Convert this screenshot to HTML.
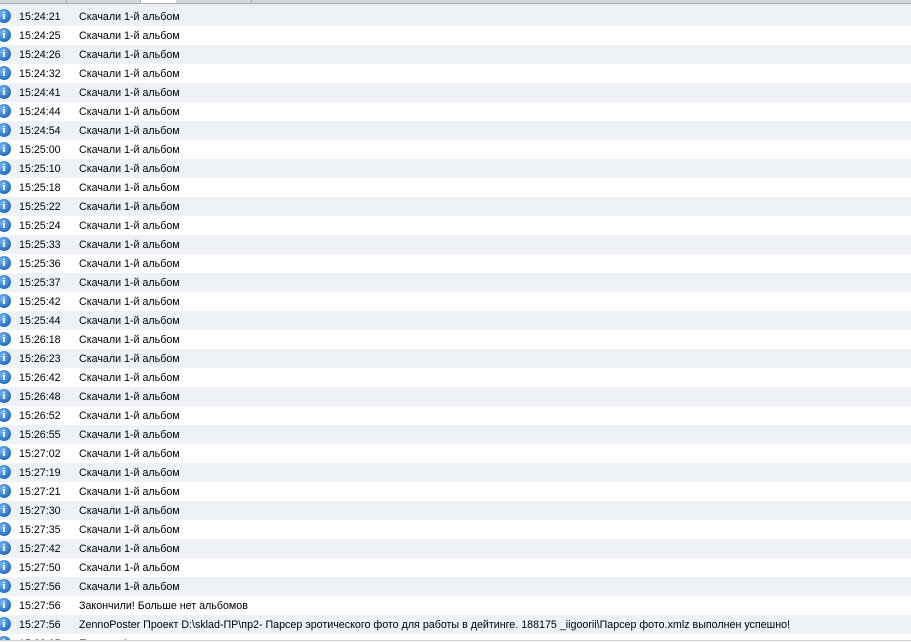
<!DOCTYPE html>
<html><head><meta charset="utf-8"><style>
html,body{margin:0;width:911px;height:643px;overflow:hidden;background:#fff}
body{font-family:Tahoma,"Liberation Sans",sans-serif;font-size:10.7px;color:#000;position:relative}
.tabs{position:absolute;left:0;top:0;width:911px;height:3px;background:#d3d7dc}
.tab{position:absolute;top:0;height:3px;border-right:1px solid #a8adb3}
.line{position:absolute;left:0;top:3px;width:911px;height:1px;background:#a9aeb4}
.strip{position:absolute;left:0;top:4px;width:911px;height:3px;background:#e9edf2}
#rows{position:absolute;left:0;top:0;width:911px;height:640px;overflow:hidden}
.row{position:absolute;left:0;width:911px;height:19px;line-height:21px;white-space:nowrap}
.row.s{background:#eef2f7}
.t{position:absolute;left:19px}
.m{position:absolute;left:79px}
.i{position:absolute;left:-3px;top:2px;width:14px;height:14px;border-radius:50%;background:radial-gradient(circle at 40% 35%,#7ab8f0,#2a72c8 65%,#154f9a);color:#fff;font:bold 11px "Liberation Serif",serif;line-height:14px;text-align:center}
</style></head><body>
<div class="tabs"><div class="tab" style="left:0;width:66px"></div><div class="tab" style="left:67px;width:73px"></div><div class="tab" style="left:141px;width:35px;background:#fff;border:none"></div><div class="tab" style="left:176px;width:75px"></div></div>
<div class="line"></div><div class="strip"></div>
<div id="rows"></div>
<div style="position:absolute;left:0;top:640px;width:911px;height:1px;background:#c8ccd0"></div>
<script>
var times=["15:24:21","15:24:25","15:24:26","15:24:32","15:24:41","15:24:44","15:24:54","15:25:00","15:25:10","15:25:18","15:25:22","15:25:24","15:25:33","15:25:36","15:25:37","15:25:42","15:25:44","15:26:18","15:26:23","15:26:42","15:26:48","15:26:52","15:26:55","15:27:02","15:27:19","15:27:21","15:27:30","15:27:35","15:27:42","15:27:50","15:27:56"];
var rows=times.map(function(t){return [t,"Скачали 1-й альбом"]});
rows.push(["15:27:56","Закончили! Больше нет альбомов"]);
rows.push(["15:27:56","ZennoPoster Проект D:\\sklad-ПР\\пр2- Парсер эротического фото для работы в дейтинге. 188175 _iigoorii\\Парсер фото.xmlz выполнен успешно!"]);
rows.push(["15:28:05","Прошли 1 страницу"]);
var h="";
rows.forEach(function(r,k){h+='<div class="row'+(k%2==0?' s':'')+'" style="top:'+(7+k*19)+'px"><div class="i">i</div><span class="t">'+r[0]+'</span><span class="m">'+r[1]+'</span></div>';});
document.getElementById("rows").innerHTML=h;
</script>
</body></html>
